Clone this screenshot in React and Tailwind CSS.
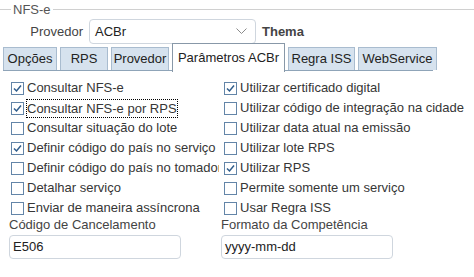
import React from 'react';

function CheckBox({ checked }) {
  return (
    <svg width="13" height="13" viewBox="0 0 13 13" className="shrink-0">
      <rect x="0.5" y="0.5" width="12" height="12" fill="#fff" stroke="#6385a8" />
      {checked && (
        <path d="M3 6.5 L5.5 9 L10 3.5" fill="none" stroke="#2f5d8c" strokeWidth="1.5" />
      )}
    </svg>
  );
}

function Check({ label, checked, focused }) {
  return (
    <div className="flex h-[20px] items-center gap-[2px] whitespace-nowrap">
      <CheckBox checked={checked} />
      <span className={focused ? 'border border-dotted border-black leading-[17px]' : 'px-px'}>
        {label}
      </span>
    </div>
  );
}

const left = [
  ['Consultar NFS-e', true],
  ['Consultar NFS-e por RPS', true, true],
  ['Consultar situação do lote', false],
  ['Definir código do país no serviço', true],
  ['Definir código do país no tomador', false],
  ['Detalhar serviço', false],
  ['Enviar de maneira assíncrona', false],
];

const right = [
  ['Utilizar certificado digital', true],
  ['Utilizar código de integração na cidade', false],
  ['Utilizar data atual na emissão', false],
  ['Utilizar lote RPS', false],
  ['Utilizar RPS', true],
  ['Permite somente um serviço', false],
  ['Usar Regra ISS', false],
];

const tabs = [
  ['Opções', 'w-[54px]'],
  ['RPS', 'w-[48px]'],
  ['Provedor', 'w-[58px]'],
  ['Parâmetros ACBr', 'w-[113px]'],
  ['Regra ISS', 'w-[67px]'],
  ['WebService', 'w-[79px]'],
];

export default function App() {
  return (
    <div className="h-[277px] w-[474px] overflow-hidden bg-white text-[13px] text-[#363636]" style={{ fontFamily: '"Liberation Sans", Arial, sans-serif' }}>
      {/* group header */}
      <div className="flex h-[19px] items-center">
        <div className="h-px w-[11px] bg-[#d0d0d0]" />
        <span className="px-[2px] text-[#555]">NFS-e</span>
        <div className="h-px flex-1 bg-[#d0d0d0]" />
      </div>

      {/* provedor row */}
      <div className="flex h-[25px] items-center">
        <span className="w-[83px] text-right text-[#444]">Provedor</span>
        <div className="ml-[6px] flex h-[25px] w-[167px] items-center justify-between rounded-[4px] border border-[#cfd6de] bg-white pl-[5px] pr-[8px] text-[#222]">
          <span>ACBr</span>
          <svg width="11" height="7" viewBox="0 0 11 7">
            <path d="M0.5 0.5 L5.5 5.5 L10.5 0.5" fill="none" stroke="#8a8a8a" />
          </svg>
        </div>
        <span className="ml-[6px] font-bold text-[#444]">Thema</span>
      </div>

      {/* tabs */}
      <div className="ml-[3px] flex h-[27px] w-[430px] items-end gap-[3px] border-b border-[#8fa4b8]">
        {tabs.map(([t, w]) =>
          t === 'Parâmetros ACBr' ? (
            <div key={t} className={`${w} mb-[-2px] flex h-[29px] shrink-0 items-center justify-center whitespace-nowrap border border-b-0 border-[#8898a8] bg-white text-[#222]`}>
              {t}
            </div>
          ) : (
            <div key={t} className={`${w} flex h-[23px] shrink-0 items-center justify-center whitespace-nowrap border border-b-0 border-[#a9bccf] bg-[#d6e2ee] text-[#222]`}>
              {t}
            </div>
          )
        )}
      </div>

      {/* checkboxes */}
      <div className="mt-[7px] flex">
        <div className="ml-[11px] w-[208px] overflow-hidden">
          {left.map(([l, c, f]) => (
            <Check key={l} label={l} checked={c} focused={f} />
          ))}
        </div>
        <div className="ml-[5px]">
          {right.map(([l, c]) => (
            <Check key={l} label={l} checked={c} />
          ))}
        </div>
      </div>

      {/* inputs */}
      <div className="flex">
        <div className="ml-[9px] w-[212px]">
          <div className="h-[16px] leading-[14px] text-[#444]">Código de Cancelamento</div>
          <div className="mt-[1px] flex h-[24px] w-[172px] items-center rounded-[4px] border border-[#cfd6de] px-[3px] text-[#222]">E506</div>
        </div>
        <div>
          <div className="h-[16px] leading-[14px] text-[#444]">Formato da Competência</div>
          <div className="mt-[1px] flex h-[24px] w-[172px] items-center rounded-[4px] border border-[#cfd6de] px-[3px] text-[#222]">yyyy-mm-dd</div>
        </div>
      </div>
    </div>
  );
}
